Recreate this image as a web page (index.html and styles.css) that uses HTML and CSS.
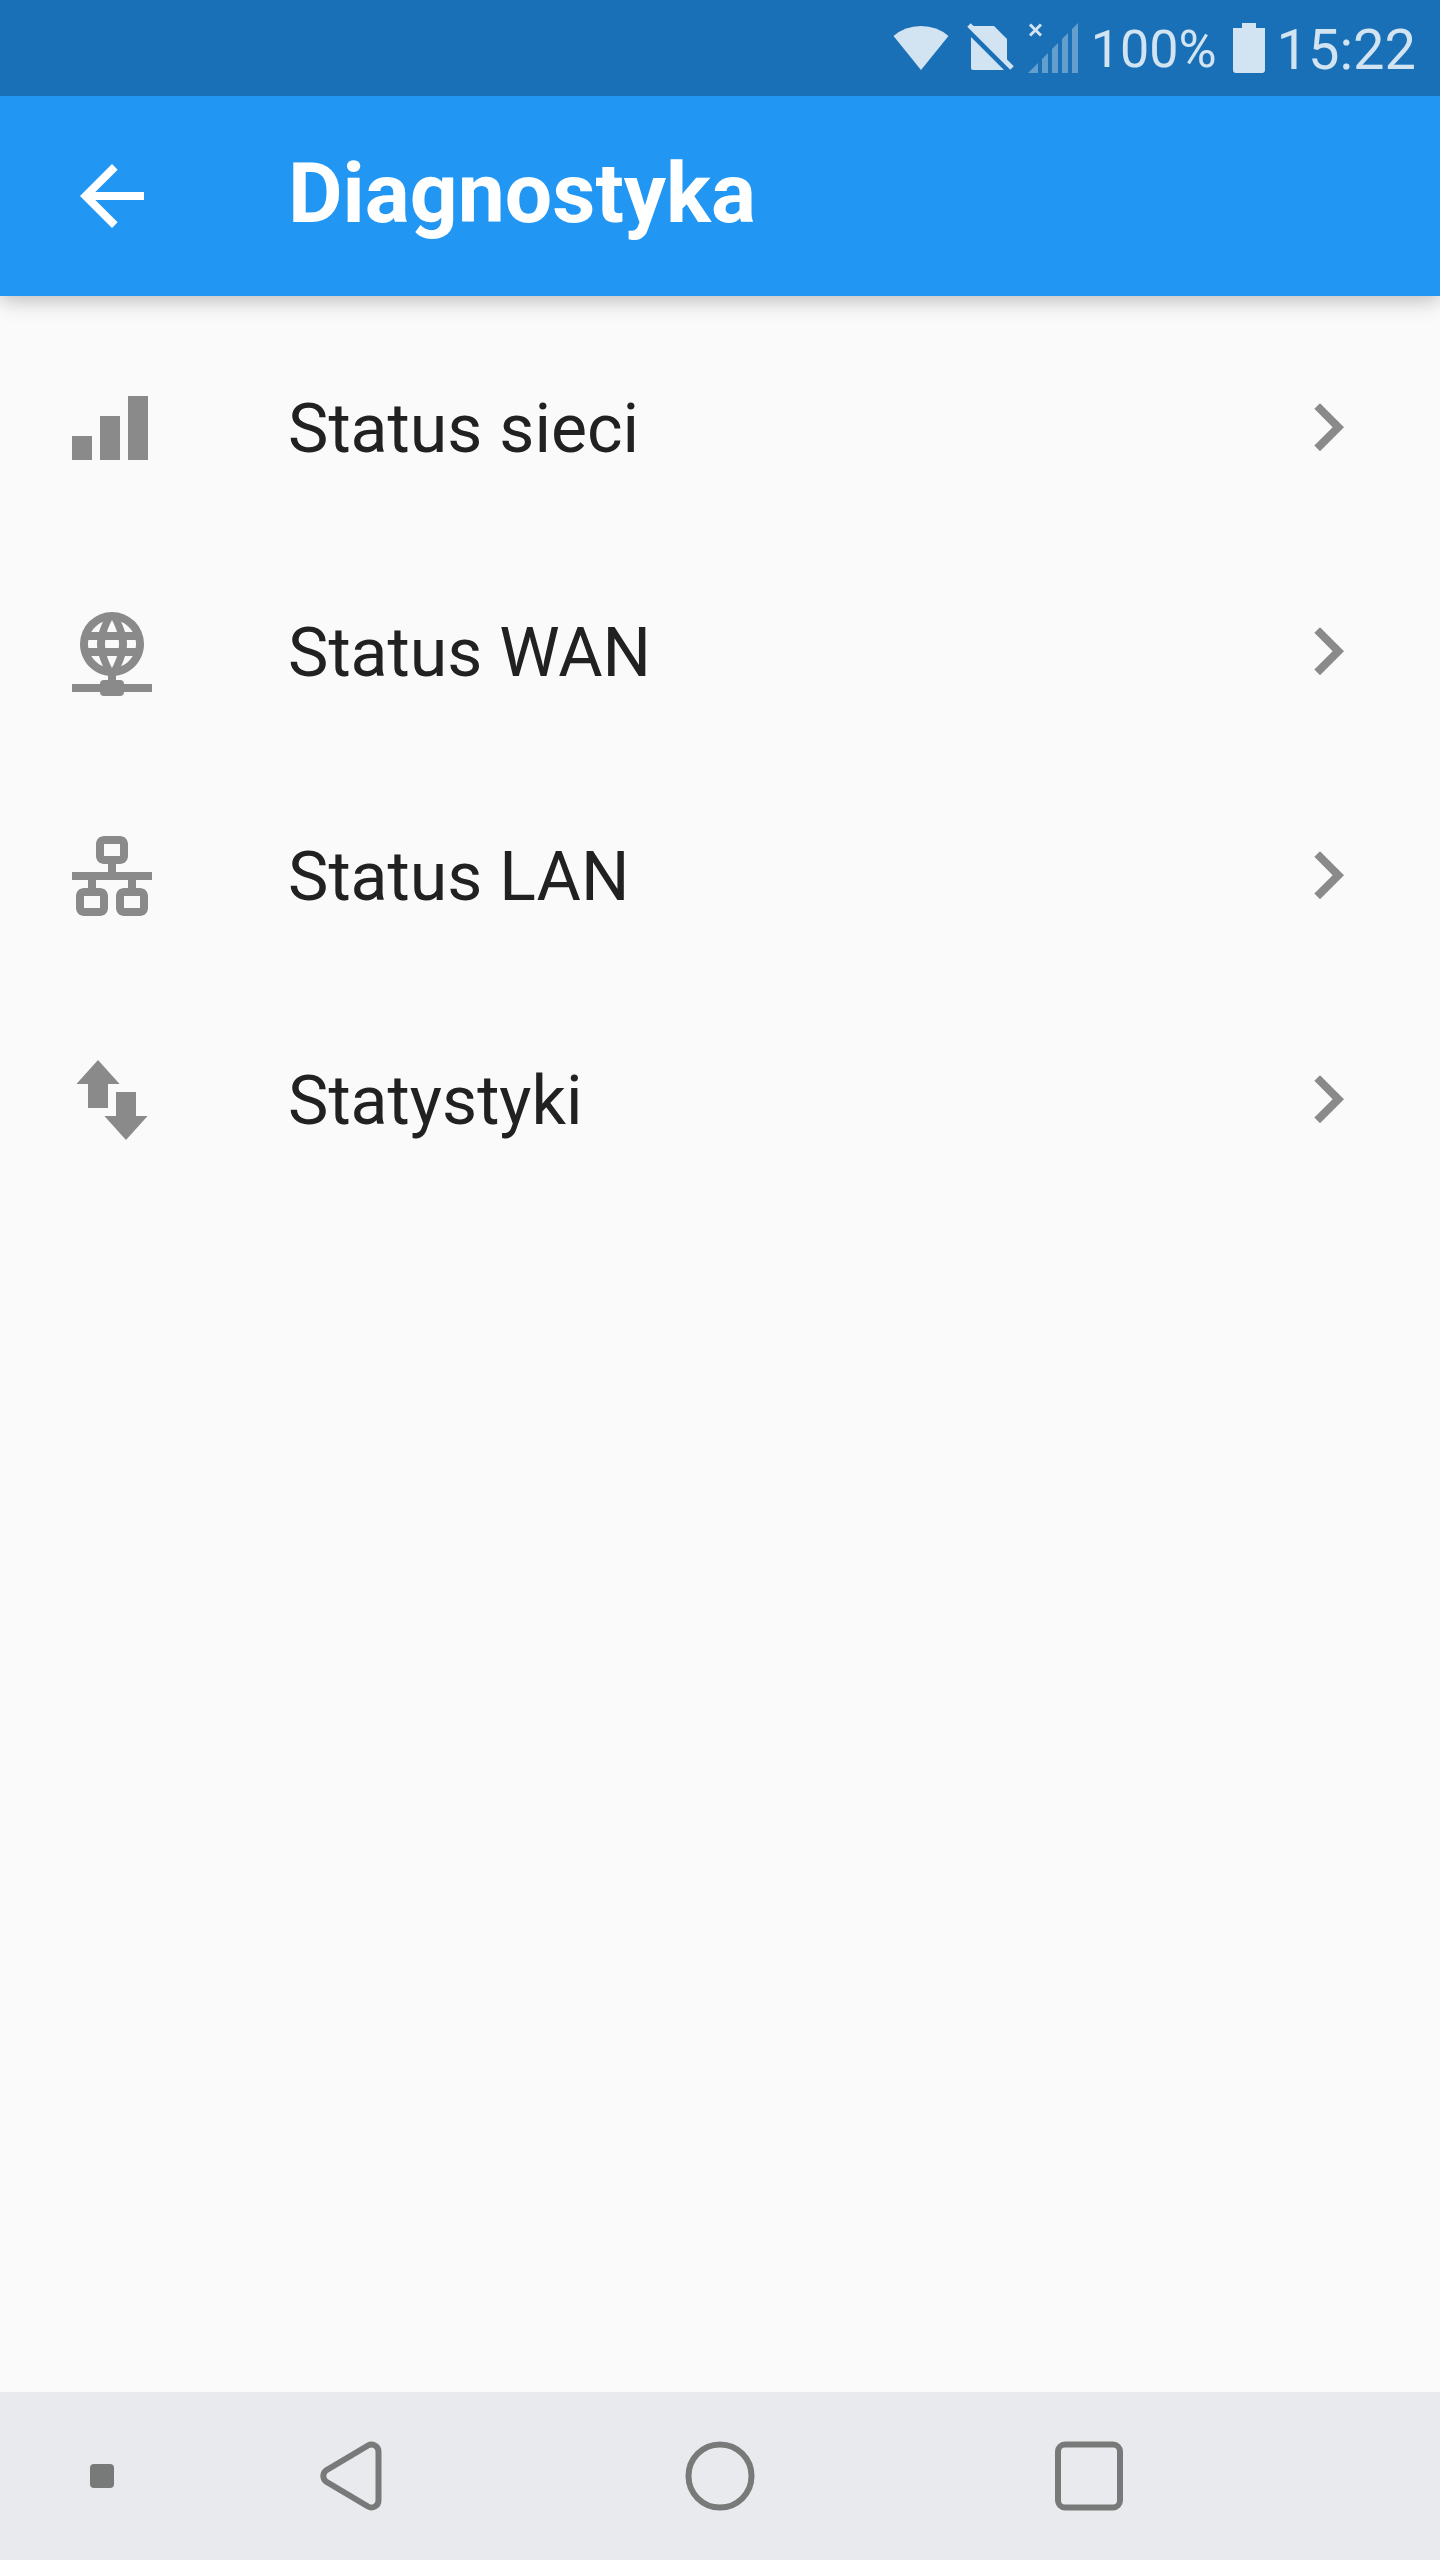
FILE: index.html
```html
<!DOCTYPE html>
<html lang="pl">
<head>
<meta charset="utf-8">
<meta name="viewport" content="width=device-width, initial-scale=1">
<title>Diagnostyka</title>
<link rel="stylesheet" href="styles.css">
</head>
<body>
<div class="status-bar">
  <svg class="status-icons" viewBox="0 0 192 96" aria-hidden="true">
    <path d="M5.500 36Q17 26 33 26T60.500 36L33 70Z"/>
    <path d="M87 26H106L119 39V62L83 26Z"/>
    <path d="M83 37L116 70H85Q83 70 83 68Z"/>
    <path class="slash" d="M81 25L124 68"/>
    <path class="cross" d="M142 24.500L153 35.500M153 24.500L142 35.500"/>
    <path class="faint" d="M140 73L150 63V73ZM154 59L160 53V73H154ZM164 49L170 43V73H164ZM174 39L180 33V73H174ZM184 29L190 23V73H184Z"/>
  </svg>
  <span class="percent">100%</span>
  <svg class="battery" viewBox="0 0 32 50" aria-hidden="true"><path d="M9 0H23V5H32V47Q32 50 29 50H3Q0 50 0 47V5H9Z"/></svg>
  <time class="clock">15:22</time>
</div>
<header class="app-bar">
  <button class="back" aria-label="Wstecz">
    <svg class="icon" viewBox="0 0 24 24"><path d="M20 11H7.830l5.590-5.590L12 4l-8 8 8 8 1.410-1.410L7.830 13H20z"/></svg>
  </button>
  <h1 class="title">Diagnostyka</h1>
</header>
<main class="content">
  <nav class="menu">
    <a class="item" href="#siec">
      <svg class="icon" viewBox="0 0 24 24" aria-hidden="true"><path d="M2 14H7V20H2ZM9 9H14V20H9ZM16 4H21V20H16Z"/></svg>
      <span class="label">Status sieci</span>
      <svg class="icon" viewBox="0 0 24 24" aria-hidden="true"><path d="M10 5.800L8.590 7.210 13.170 11.800l-4.580 4.590L10 17.800l6-6z"/></svg>
    </a>
    <a class="item" href="#wan">
      <svg class="icon" viewBox="0 0 24 24" aria-hidden="true"><path d="M12,2A8,8 0 0,0 4,10C4,14.03 7,17.42 11,17.93V19H10A1,1 0 0,0 9,20H2V22H9A1,1 0 0,0 10,23H14A1,1 0 0,0 15,22H22V20H15A1,1 0 0,0 14,19H13V17.93C17,17.43 20,14.03 20,10A8,8 0 0,0 12,2M12,4C12,4 12.74,5.28 13.26,7H10.74C11.26,5.28 12,4 12,4M9.77,4.43C9.5,4.93 9.09,5.84 8.74,7H6.81C7.5,5.84 8.5,4.93 9.77,4.43M14.23,4.44C15.5,4.94 16.5,5.84 17.19,7H15.26C14.91,5.84 14.5,4.93 14.23,4.44M6.09,9H8.32C8.28,9.33 8.25,9.66 8.25,10C8.25,10.34 8.28,10.67 8.32,11H6.09C6.03,10.67 6,10.34 6,10C6,9.66 6.03,9.33 6.09,9M10.32,9H13.68C13.72,9.33 13.75,9.66 13.75,10C13.75,10.34 13.72,10.67 13.68,11H10.32C10.28,10.67 10.25,10.34 10.25,10C10.25,9.66 10.28,9.33 10.32,9M15.68,9H17.91C17.97,9.33 18,9.66 18,10C18,10.34 17.97,10.67 17.91,11H15.68C15.72,10.67 15.75,10.34 15.75,10C15.75,9.66 15.72,9.33 15.68,9M6.81,13H8.74C9.09,14.16 9.5,15.07 9.77,15.56C8.5,15.06 7.5,14.16 6.81,13M10.74,13H13.26C12.74,14.72 12,16 12,16C12,16 11.26,14.72 10.74,13M15.26,13H17.19C16.5,14.16 15.5,15.07 14.23,15.57C14.5,15.07 14.91,14.16 15.26,13Z"/></svg>
      <span class="label">Status WAN</span>
      <svg class="icon" viewBox="0 0 24 24" aria-hidden="true"><path d="M10 5.800L8.590 7.210 13.170 11.800l-4.580 4.590L10 17.800l6-6z"/></svg>
    </a>
    <a class="item" href="#lan">
      <svg class="icon" viewBox="0 0 24 24" aria-hidden="true"><path d="M10,2C8.89,2 8,2.89 8,4V7C8,8.11 8.89,9 10,9H11V11H2V13H6V15H5C3.89,15 3,15.89 3,17V20C3,21.11 3.89,22 5,22H9C10.11,22 11,21.11 11,20V17C11,15.89 10.11,15 9,15H8V13H16V15H15C13.89,15 13,15.89 13,17V20C13,21.11 13.89,22 15,22H19C20.11,22 21,21.11 21,20V17C21,15.89 20.11,15 19,15H18V13H22V11H13V9H14C15.11,9 16,8.11 16,7V4C16,2.89 15.11,2 14,2H10M10,4H14V7H10V4M5,17H9V20H5V17M15,17H19V20H15V17Z"/></svg>
      <span class="label">Status LAN</span>
      <svg class="icon" viewBox="0 0 24 24" aria-hidden="true"><path d="M10 5.800L8.590 7.210 13.170 11.800l-4.580 4.590L10 17.800l6-6z"/></svg>
    </a>
    <a class="item" href="#statystyki">
      <svg class="icon" viewBox="0 0 24 24" aria-hidden="true"><path d="M8.500 2L13.900 8H11V14H6V8H3.100ZM13 10H18V16H20.900L15.500 22L10.100 16H13Z"/></svg>
      <span class="label">Statystyki</span>
      <svg class="icon" viewBox="0 0 24 24" aria-hidden="true"><path d="M10 5.800L8.590 7.210 13.170 11.800l-4.580 4.590L10 17.800l6-6z"/></svg>
    </a>
  </nav>
</main>
<footer class="nav-bar">
  <button class="nav-button nav-pin" aria-label="Ukryj pasek"><svg class="nav-icon" viewBox="0 0 96 96"><rect class="solid" x="36" y="36" width="24" height="24" rx="4"/></svg></button>
  <button class="nav-button" aria-label="Wróć"><svg class="nav-icon" viewBox="0 0 96 96"><path d="M65 17.500A7 7 0 0 1 75.500 23.500V72.500A7 7 0 0 1 65 78.500L23 53.500A7 7 0 0 1 23 42.500Z"/></svg></button>
  <button class="nav-button" aria-label="Ekran główny"><svg class="nav-icon" viewBox="0 0 96 96"><circle cx="48" cy="48" r="31.500"/></svg></button>
  <button class="nav-button" aria-label="Ostatnie aplikacje"><svg class="nav-icon" viewBox="0 0 96 96"><rect x="17" y="16.500" width="62" height="63" rx="7"/></svg></button>
</footer>
</body>
</html>
```
FILE: styles.css
```css
* {
  box-sizing: border-box;
}

body {
  margin: 0;
  min-height: 100vh;
  display: flex;
  flex-direction: column;
  background: #fafafa;
  color: #212121;
  font-family: Roboto, "Noto Sans", sans-serif;
}

button {
  border: 0;
  padding: 0;
  background: none;
  color: inherit;
}

svg {
  display: block;
  flex: none;
  fill: currentColor;
}

.status-bar {
  position: relative;
  z-index: 1;
  height: 96px;
  display: flex;
  align-items: center;
  justify-content: flex-end;
  padding-right: 24px;
  background: #1a70b6;
  color: #d2e3f1;
  line-height: 64px;
}

.status-icons {
  width: 192px;
  height: 96px;
  margin-right: 11px;
}

.slash,
.cross {
  fill: none;
  stroke: currentColor;
  stroke-width: 5;
}

.cross {
  stroke-width: 3;
}

.faint {
  opacity: 0.4;
}

.percent {
  padding-top: 4px;
  font-size: 52px;
}

.battery {
  width: 32px;
  height: 50px;
  margin: 0 12px 0 16px;
}

.clock {
  padding-top: 4px;
  font-size: 56px;
}

.app-bar {
  height: 200px;
  display: flex;
  align-items: center;
  gap: 128px;
  padding: 0 64px;
  background: #2196f3;
  color: #fff;
  box-shadow: 0 4px 20px rgba(0, 0, 0, 0.26);
}

.title {
  margin: 0;
  padding-bottom: 4px;
  font-size: 84px;
  font-weight: 700;
  line-height: 96px;
}

.icon {
  width: 96px;
  height: 96px;
}

.content {
  flex: 1;
  padding: 20px 0;
}

.item {
  height: 224px;
  display: flex;
  align-items: center;
  padding: 0 64px;
  color: #8a8a8a;
  text-decoration: none;
}

.label {
  flex: 1;
  padding: 2px 0 0 128px;
  color: #212121;
  font-size: 68px;
  line-height: 80px;
}

.nav-bar {
  height: 168px;
  display: grid;
  grid-template-columns: 166fr 369fr 369fr 369fr 167fr;
  background: #e9eaed;
  color: #787a79;
}

.nav-button {
  display: flex;
  align-items: center;
  justify-content: center;
}

.nav-pin {
  padding-left: 38px;
}

.nav-icon {
  width: 96px;
  height: 96px;
  fill: none;
  stroke: currentColor;
  stroke-width: 6;
}

.solid {
  fill: currentColor;
  stroke: none;
}
```
